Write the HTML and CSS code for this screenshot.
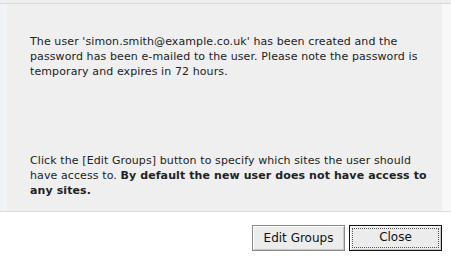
FILE: index.html
```html
<!DOCTYPE html>
<html lang="en">
<head>
    <meta charset="UTF-8">
    <title>User Created</title>
    <link rel="stylesheet" href="styles.css">
</head>
<body>
    <div class="top-strip"></div>
    <div class="dialog">
        <div class="gutter"></div>
        <div class="panel">
            <p>The user 'simon.smith@example.co.uk' has been created and the password has been e-mailed to the user. Please note the password is temporary and expires in 72 hours.</p>
            <p class="groups-note">Click the [Edit Groups] button to specify which sites the user should have access to. <b>By default the new user does not have access to any sites.</b></p>
        </div>
        <div class="gutter-right"></div>
    </div>
    <div class="buttons">
        <button class="btn">Edit Groups</button>
        <button class="btn btn-default"><span>Close</span></button>
    </div>
</body>
</html>
```

FILE: styles.css
```css
body {
    margin: 0;
    background-color: #fff;
    font-family: "DejaVu Sans", Verdana, sans-serif;
    font-size: 11px;
    letter-spacing: 0.1px;
    color: #222;
}

.top-strip {
    height: 3px;
    background-color: #eceef0;
    border-bottom: 1px solid #d8dadc;
}

.dialog {
    display: flex;
    border-bottom: 1px solid #dcdcdc;
}

.gutter {
    width: 7px;
    background: linear-gradient(to right, #eef1f6, #f3f4f6);
}

.gutter-right {
    width: 9px;
    background-color: #f8f8f8;
}

.panel {
    flex: 1;
    background-color: #efefef;
    padding: 30px 9px 13px 23px;
    line-height: 15px;
}

.panel p {
    margin: 0;
}

.panel .groups-note {
    margin-top: 74px;
}

.buttons {
    display: flex;
    justify-content: flex-end;
    gap: 4px;
    padding: 13px 9px 0 0;
}

.btn {
    width: 93px;
    height: 26px;
    font-family: "DejaVu Sans", Verdana, sans-serif;
    font-size: 12px;
    color: #111;
    background-color: #ececec;
    border: 1px solid #8a8a8a;
    box-shadow: inset 1px 1px 0 #fff, inset -1px -1px 0 #c8c8c8;
    padding: 0;
}

.btn-default {
    border: 1px solid #111;
    padding: 2px;
}

.btn-default span {
    display: block;
    height: 18px;
    line-height: 17px;
    border: 1px dotted #555;
}
```
